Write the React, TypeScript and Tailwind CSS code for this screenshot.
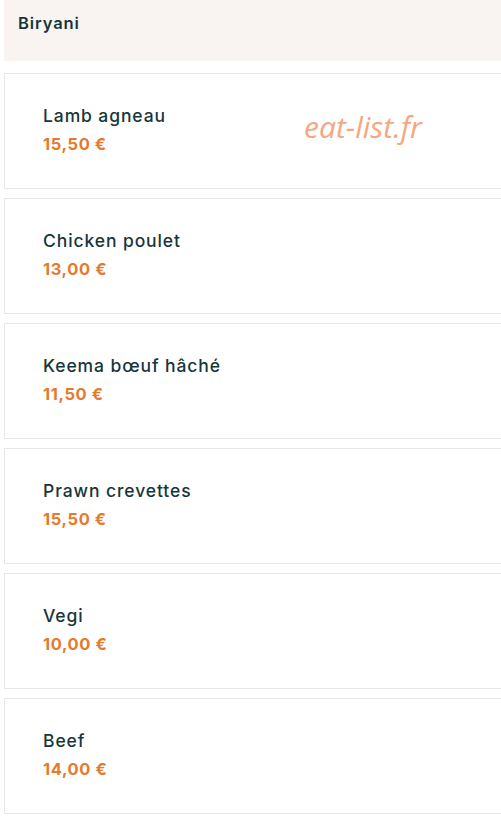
import React from 'react';

interface Dish {
  name: string;
  price: string;
}

const dishes: Dish[] = [
  { name: 'Lamb agneau', price: '15,50 €' },
  { name: 'Chicken poulet', price: '13,00 €' },
  { name: 'Keema bœuf hâché', price: '11,50 €' },
  { name: 'Prawn crevettes', price: '15,50 €' },
  { name: 'Vegi', price: '10,00 €' },
  { name: 'Beef', price: '14,00 €' },
];

function DishCard({ dish, watermark }: { dish: Dish; watermark?: boolean }) {
  return (
    <div className="relative h-[116px] border border-r-0 border-[#e8e6e4] bg-white flex flex-col justify-center pl-[38px] pb-[4px]">
      <div className="text-[17.5px] leading-[22px] font-medium tracking-[0.9px] text-[#17363b]">{dish.name}</div>
      <div className="mt-[7px] text-[16.5px] leading-[20px] font-bold tracking-[0.6px] text-[#e67a2c]">{dish.price}</div>
      {watermark && (
        <div
          className="absolute left-[299px] top-[30px] text-[30px] italic text-[#f5a77f]"
          style={{ fontFamily: '"Open Sans", sans-serif' }}
        >
          eat-list.fr
        </div>
      )}
    </div>
  );
}

export default function App() {
  return (
    <div className="w-[501px] h-[819px] bg-white pl-[4px] overflow-hidden" style={{ fontFamily: 'Inter, "Noto Sans", sans-serif' }}>
      <div className="h-[61px] bg-[#f9f4f1] flex items-center pl-[14px] pb-[15px]">
        <span className="text-[16.5px] font-semibold tracking-[0.9px] text-[#17363b]">Biryani</span>
      </div>
      <div className="flex flex-col gap-[9px] pt-[12px]">
        {dishes.map((d, i) => (
          <DishCard key={d.name} dish={d} watermark={i === 0} />
        ))}
      </div>
    </div>
  );
}
